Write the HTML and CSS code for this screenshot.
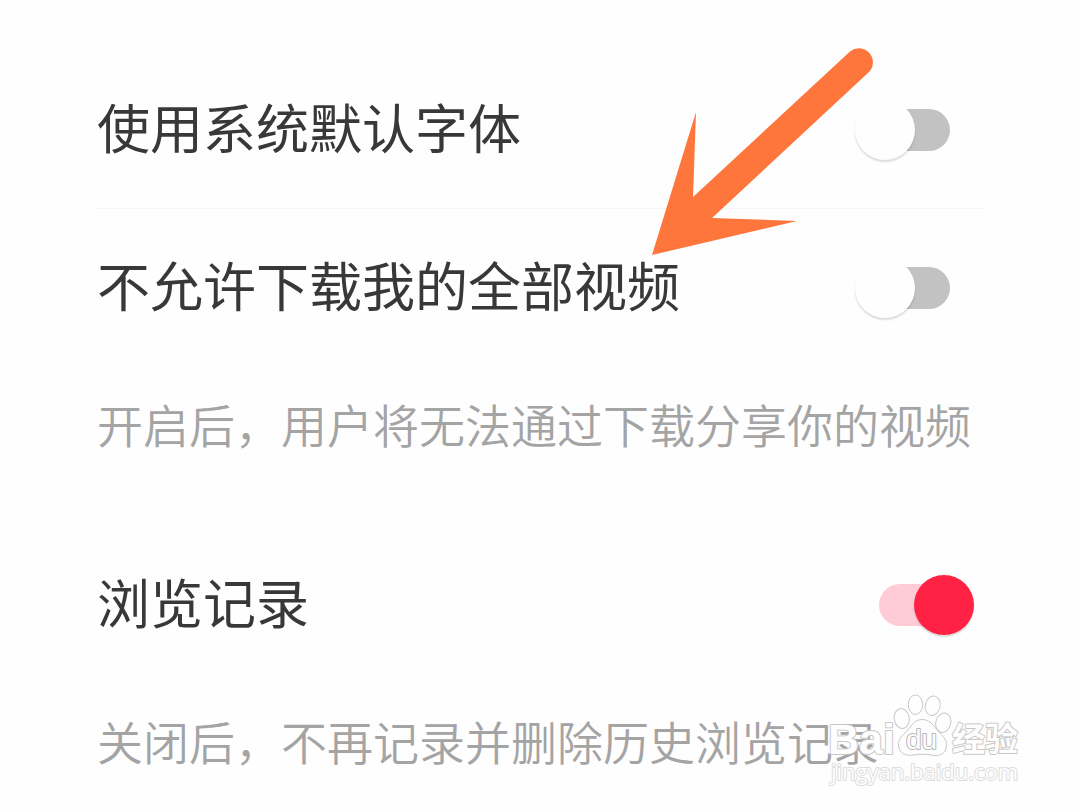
FILE: index.html
```html
<!DOCTYPE html>
<html lang="zh-CN">
<head>
    <meta charset="UTF-8">
    <meta name="viewport" content="width=device-width, initial-scale=1.0">
    <title>设置</title>
    <link rel="stylesheet" href="styles.css">
</head>
<body>

    <main class="settings">
        <div class="row divider">
            <label for="sysFont">使用系统默认字体</label>
            <input type="checkbox" class="switch" id="sysFont">
        </div>

        <div class="row">
            <label for="noDownload">不允许下载我的全部视频</label>
            <input type="checkbox" class="switch" id="noDownload">
        </div>
        <p class="hint">开启后，用户将无法通过下载分享你的视频</p>

        <div class="row">
            <label for="history">浏览记录</label>
            <input type="checkbox" class="switch" id="history" checked>
        </div>
        <p class="hint">关闭后，不再记录并删除历史浏览记录</p>
    </main>

    <svg class="arrow" viewBox="650 46 226 210" aria-hidden="true">
        <path d="M652 255 L696 112 L693 197 L850 51.500 A14 14 0 0 1 869 72 L712 218 L797 221 Z"/>
    </svg>

    <svg class="watermark" viewBox="824 690 202 100">
        <text class="brand" x="828" y="754">Bai</text>
        <g class="paw">
            <ellipse cx="901.700" cy="718.500" rx="7.500" ry="10" transform="rotate(-10 901.700 718.500)"/>
            <ellipse cx="915.500" cy="704.700" rx="7.200" ry="9.800"/>
            <ellipse cx="932.700" cy="705.700" rx="7.400" ry="9.800" transform="rotate(12 932.700 705.700)"/>
            <ellipse cx="943.300" cy="722.700" rx="7.500" ry="9.800" transform="rotate(15 943.300 722.700)"/>
            <path d="M922 719.500 C914 719.500 911 727 906 732 C900 737 897 742 899 748 C901 755 908 756 914 755 C920 754 926 754 931 755 C938 756.500 945 755 946 748 C948 741 944 737 939 732 C934 727 931 719.500 922 719.500 Z"/>
        </g>
        <text class="du" x="906" y="749">du</text>
        <text class="cn" x="952" y="751">经验</text>
        <text class="url" x="831" y="780">jingyan.baidu.com</text>
    </svg>

</body>
</html>
```

FILE: styles.css
```css
* { box-sizing: border-box; }
body { position: relative; margin: 0; background: #fefefe; font-family: "Noto Sans CJK SC", sans-serif; }

.settings { padding: 51px 97px 0; }
.row { display: flex; align-items: center; justify-content: space-between; height: 158px; padding-right: 33px; }
.divider { border-bottom: 1px solid #f5f5f5; }
.row label { padding-bottom: 8px; font-size: 53px; line-height: 60px; color: #383838; white-space: nowrap; }
.hint { margin: 0; padding: 26px 0 73px; font-size: 46px; font-weight: 350; line-height: 60px; color: #a4a4a4; white-space: nowrap; }
.hint:last-child { padding-bottom: 30px; }

/* switch: the knob is wider than the end of the track */
.switch { appearance: none; position: relative; flex: none; width: 71px; height: 42px; margin: 0; border-radius: 21px; background: #c2c2c2; cursor: pointer; }
.switch::before { content: ""; position: absolute; top: -9px; left: -24px; width: 60px; height: 60px; border-radius: 50%; background: #fefefe; box-shadow: 0 2px 2px rgba(0, 0, 0, 0.14); }
.switch:checked { background: #ffccd5; }
.switch:checked::before { left: 35px; background: #ff2244; }

.arrow { position: absolute; top: 46px; left: 650px; width: 226px; height: 210px; fill: #ff763d; pointer-events: none; }

.watermark { position: absolute; top: 690px; right: 54px; width: 202px; height: 100px; pointer-events: none; }
.watermark text { fill: #fefefe; stroke: #c8c8c8; stroke-width: 2px; stroke-linejoin: round; paint-order: stroke; font-family: "Liberation Sans", sans-serif; }
.watermark .brand { font-size: 43px; font-weight: bold; }
.watermark .du { font-size: 28px; stroke: #b8b8b8; }
.watermark .cn { font-family: "Noto Sans CJK SC", sans-serif; font-size: 33px; font-weight: bold; }
.watermark .url { font-family: "Open Sans", sans-serif; font-size: 22px; stroke: #dcdcdc; }
.paw { fill: #fefefe; stroke: #c8c8c8; stroke-width: 1px; }
```
